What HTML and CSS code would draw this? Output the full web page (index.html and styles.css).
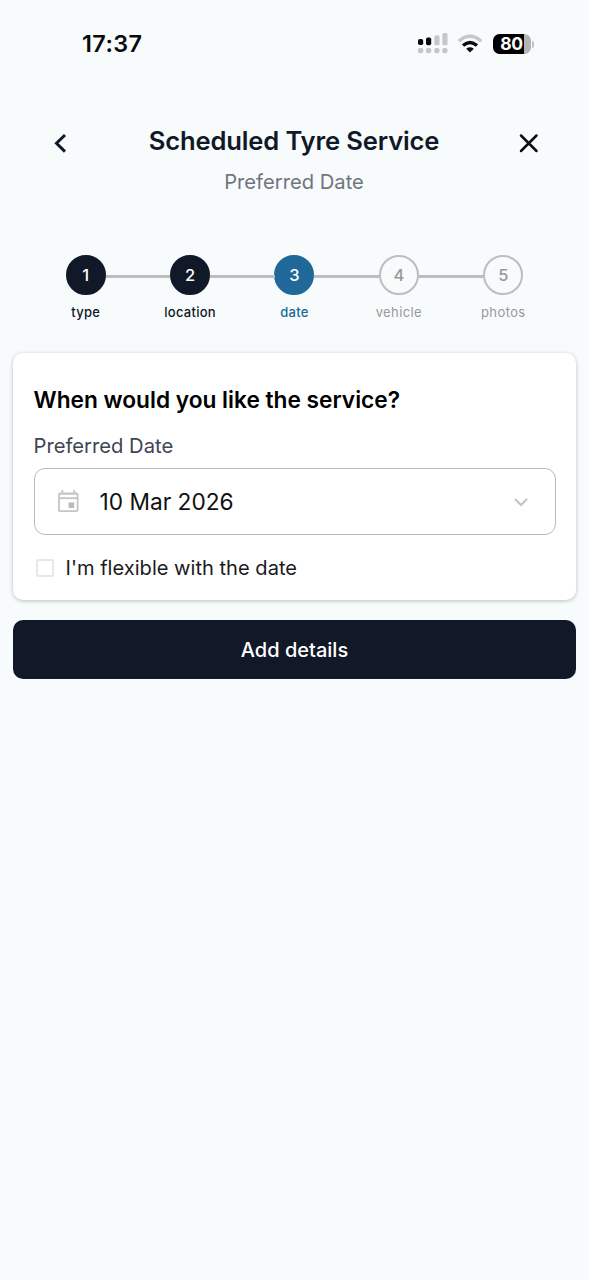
FILE: index.html
```html
<!DOCTYPE html>
<html lang="en">
<head>
<meta charset="utf-8">
<title>Scheduled Tyre Service</title>
<link rel="stylesheet" href="styles.css">
</head>
<body>
<div class="status">
  <span class="time">17:37</span>
  <div class="status-icons">
    <svg class="signal" width="30" height="22" viewBox="0 0 30 22">
      <g fill="#0b0b0c"><rect x="0" y="6" width="5.2" height="6" rx="1.7"/><rect x="8" y="4.5" width="5.2" height="7.7" rx="1.7"/></g>
      <g fill="#c5c7c8"><rect x="16.3" y="2.2" width="5.2" height="10" rx="1.5"/><rect x="24.3" y="0" width="5.2" height="12.2" rx="1.5"/><rect x="0" y="15" width="5.2" height="5.2" rx="1.8"/><rect x="8" y="15" width="5.2" height="5.2" rx="1.8"/><rect x="16.3" y="15" width="5.2" height="5.2" rx="1.8"/><rect x="24.3" y="15" width="5.2" height="5.2" rx="1.8"/></g>
    </svg>
    <svg class="wifi" width="26" height="20" viewBox="0 0 26 20" fill="none">
      <path d="M1.8 7.2Q13-2.6 24.2 7.2" stroke="#c5c7c8" stroke-width="3.4"/>
      <path d="M6 11.6Q13 5.4 20 11.6" stroke="#0b0b0c" stroke-width="3.4"/>
      <path d="M9.2 14.7Q13 11.8 16.8 14.7L13 18.6Z" fill="#0b0b0c"/>
    </svg>
    <div class="battery"><span class="level">80</span></div>
    <span class="tip"></span>
  </div>
</div>
<header class="header">
  <svg class="back" width="24" height="24" viewBox="0 0 24 24" fill="none" stroke="#111827" stroke-width="3"><path d="M17 4L8.5 12.3L17 20.6"/></svg>
  <div class="headings">
    <h1 class="title">Scheduled Tyre Service</h1>
    <p class="subtitle">Preferred Date</p>
  </div>
  <svg class="close" width="24" height="24" viewBox="0 0 24 24" fill="none" stroke="#0b0d12" stroke-width="2.5" stroke-linecap="round"><path d="M4 4.5L19.5 20M19.5 4.5L4 20"/></svg>
</header>
<ol class="steps">
  <li class="step done"><span class="dot">1</span><span class="name">type</span></li>
  <li class="step done"><span class="dot">2</span><span class="name">location</span></li>
  <li class="step active"><span class="dot">3</span><span class="name">date</span></li>
  <li class="step"><span class="dot">4</span><span class="name">vehicle</span></li>
  <li class="step"><span class="dot">5</span><span class="name">photos</span></li>
</ol>
<main class="content">
  <section class="card">
    <h2 class="question">When would you like the service?</h2>
    <div class="label">Preferred Date</div>
    <div class="field">
      <svg class="calendar" width="24" height="26" viewBox="0 0 24 26" fill="none" stroke="#c4c5c7" stroke-width="1.8"><rect x="3" y="4.4" width="18.6" height="17.8" rx="1.3"/><path d="M3 5.2H21.6" stroke-width="1"/><path d="M3 9.2H21.6"/><path d="M6.4 1V5M18.2 1V5"/><rect x="12.6" y="13.4" width="5.6" height="5.6" fill="#b9babd" stroke="none"/></svg>
      <span class="value">10 Mar 2026</span>
      <svg class="chevron" width="16" height="12" viewBox="0 0 16 12" fill="none" stroke="#c2c3c4" stroke-width="2"><path d="M2 3L8 9L14 3"/></svg>
    </div>
    <label class="check"><span class="box"></span><span class="check-text">I'm flexible with the date</span></label>
  </section>
  <button class="submit">Add details</button>
</main>
</body>
</html>
```
FILE: styles.css
```css
* { box-sizing: border-box; }
body { margin: 0; min-height: 1280px; background: #f7fbfc; font-family: Inter, sans-serif; color: #0b0b0c; }
h1, h2, p, ol { margin: 0; padding: 0; }
.status { display: flex; justify-content: space-between; height: 88px; padding: 0 55px 0 82px; align-items: center; }
.time { font-size: 23.4px; font-weight: 600; line-height: 28px; letter-spacing: .4px; }
.status-icons { display: flex; align-items: center; }
.wifi { margin-left: 9px; }
.battery { margin-left: 10px; width: 38px; height: 20px; border-radius: 6.5px; overflow: hidden; background: linear-gradient(90deg, #000 31px, #b2b4b5 31px); }
.level { display: block; padding-right: 1px; text-align: center; color: #fff; font-size: 17.5px; line-height: 20px; font-weight: 700; letter-spacing: -.3px; }
.tip { width: 2px; height: 7px; margin-left: 1px; border-radius: 0 2px 2px 0; background: #c0c2c3; }
.header { display: flex; justify-content: space-between; padding: 36px 48.5px 0 47.5px; height: 166px; }
.back, .close { margin-top: 7px; }
.headings { text-align: center; }
.title { font-size: 25.6px; line-height: 34px; font-weight: 600; letter-spacing: -.15px; color: #111827; }
.subtitle { margin-top: 7px; font-size: 20.2px; line-height: 33px; color: #70757e; }
.steps { display: grid; grid-template-columns: repeat(5, 1fr); height: 98.5px; margin: 0 33.5px; list-style: none; }
.step { position: relative; display: flex; flex-direction: column; align-items: center; color: #97989b; }
.step + .step::before { content: ""; position: absolute; top: 21px; left: calc(-50% + 20px); right: calc(50% + 20px); height: 2.5px; background: #bcbdbf; }
.dot { display: flex; align-items: center; justify-content: center; width: 40px; height: 40px; margin-top: 1px; border: 2.5px solid #bcbdbf; border-radius: 50%; font-size: 16.5px; font-weight: 500; }
.name { margin-top: 8px; font-size: 13px; line-height: 18px; font-weight: 400; letter-spacing: .4px; }
.done { color: #111827; }
.done .name, .active .name { font-weight: 500; letter-spacing: .25px; }
.done .dot { background: #111827; border-color: #111827; color: #fff; }
.active { color: #21689a; }
.active .dot { background: #21689a; border-color: #21689a; color: #fff; }
.content { padding: 0 13px; }
.card { height: 247.5px; padding: 30.5px 20.5px 0; border-radius: 10px; background: #fff; box-shadow: 0 1px 4px rgba(0,0,0,.24); }
.question { font-size: 22.7px; line-height: 33px; font-weight: 600; color: #000; }
.label { margin-top: 15px; font-size: 20.2px; line-height: 29px; color: #3e4553; }
.field { display: flex; align-items: center; height: 67px; margin-top: 8px; padding: 0 26px 0 21px; border: 1.5px solid #b9babc; border-radius: 11px; }
.value { flex: 1; margin-left: 20px; font-size: 22.7px; line-height: 30px; color: #111; }
.check { display: flex; align-items: center; height: 28px; margin-top: 19px; padding-left: 2.5px; }
.box { width: 18px; height: 18px; border: 2px solid #e6e7e8; border-radius: 2px; }
.check-text { margin-left: 11.5px; font-size: 20.1px; color: #1b1b1d; }
.submit { display: block; width: 100%; height: 59px; margin-top: 20px; padding: 0; border: 0; border-radius: 10px; background: #111827; color: #fff; font: 500 20px/60px Inter, sans-serif; }
```
